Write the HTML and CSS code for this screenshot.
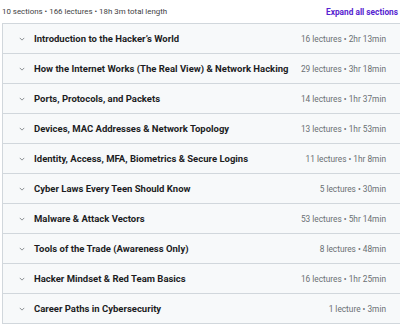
FILE: index.html
```
<!DOCTYPE html>
<html>
<head>
<meta charset="utf-8">
<link rel="stylesheet" href="styles.css">
</head>
<body>
<div class="top">
  <span class="meta">10 sections • 166 lectures • 18h 3m total length</span>
  <span class="expand">Expand all sections</span>
</div>
<div class="list">
  <div class="row"><svg class="chev" viewBox="0 0 8 5"><path d="M1 1l3 3 3-3" fill="none" stroke="#6a6f73" stroke-width="1"/></svg><span class="title">Introduction to the Hacker’s World</span><span class="info">16 lectures • 2hr 13min</span></div>
  <div class="row"><svg class="chev" viewBox="0 0 8 5"><path d="M1 1l3 3 3-3" fill="none" stroke="#6a6f73" stroke-width="1"/></svg><span class="title">How the Internet Works (The Real View) &amp; Network Hacking</span><span class="info">29 lectures • 3hr 18min</span></div>
  <div class="row"><svg class="chev" viewBox="0 0 8 5"><path d="M1 1l3 3 3-3" fill="none" stroke="#6a6f73" stroke-width="1"/></svg><span class="title">Ports, Protocols, and Packets</span><span class="info">14 lectures • 1hr 37min</span></div>
  <div class="row"><svg class="chev" viewBox="0 0 8 5"><path d="M1 1l3 3 3-3" fill="none" stroke="#6a6f73" stroke-width="1"/></svg><span class="title">Devices, MAC Addresses &amp; Network Topology</span><span class="info">13 lectures • 1hr 53min</span></div>
  <div class="row"><svg class="chev" viewBox="0 0 8 5"><path d="M1 1l3 3 3-3" fill="none" stroke="#6a6f73" stroke-width="1"/></svg><span class="title">Identity, Access, MFA, Biometrics &amp; Secure Logins</span><span class="info">11 lectures • 1hr 8min</span></div>
  <div class="row"><svg class="chev" viewBox="0 0 8 5"><path d="M1 1l3 3 3-3" fill="none" stroke="#6a6f73" stroke-width="1"/></svg><span class="title">Cyber Laws Every Teen Should Know</span><span class="info">5 lectures • 30min</span></div>
  <div class="row"><svg class="chev" viewBox="0 0 8 5"><path d="M1 1l3 3 3-3" fill="none" stroke="#6a6f73" stroke-width="1"/></svg><span class="title">Malware &amp; Attack Vectors</span><span class="info">53 lectures • 5hr 14min</span></div>
  <div class="row"><svg class="chev" viewBox="0 0 8 5"><path d="M1 1l3 3 3-3" fill="none" stroke="#6a6f73" stroke-width="1"/></svg><span class="title">Tools of the Trade (Awareness Only)</span><span class="info">8 lectures • 48min</span></div>
  <div class="row"><svg class="chev" viewBox="0 0 8 5"><path d="M1 1l3 3 3-3" fill="none" stroke="#6a6f73" stroke-width="1"/></svg><span class="title">Hacker Mindset &amp; Red Team Basics</span><span class="info">16 lectures • 1hr 25min</span></div>
  <div class="row"><svg class="chev" viewBox="0 0 8 5"><path d="M1 1l3 3 3-3" fill="none" stroke="#6a6f73" stroke-width="1"/></svg><span class="title">Career Paths in Cybersecurity</span><span class="info">1 lecture • 3min</span></div>
</div>
</body>
</html>
```
FILE: styles.css
```
html, body {
  margin: 0;
  padding: 0;
  background: #fff;
  font-family: Roboto, "Noto Sans", sans-serif;
  color: #2d2f31;
  overflow: hidden;
}
.top {
  height: 23px;
  display: flex;
  align-items: center;
  justify-content: space-between;
  padding: 0 2px 0 2px;
  box-sizing: border-box;
}
.meta {
  font-size: 7.9px;
  color: #3e4143;
}
.expand {
  font-size: 8.3px;
  font-weight: 700;
  color: #5624d0;
}
.list {
  margin-left: 2px;
  width: 398px;
  border: 1px solid #d1d7dc;
  border-right: none;
  box-sizing: border-box;
  background: #f7f9fa;
}
.row {
  height: 30px;
  display: flex;
  align-items: center;
  padding: 0 14px 0 16px;
  box-sizing: border-box;
  border-top: 1px solid #d1d7dc;
}
.row:first-child {
  border-top: none;
  height: 29px;
}
.chev {
  width: 6px;
  height: 4px;
  margin-right: 9px;
  flex: none;
}
.title {
  font-size: 9.5px;
  font-weight: 700;
  color: #1c1d1f;
  flex: 1;
  white-space: nowrap;
}
.info {
  font-size: 8.3px;
  color: #6a6f73;
  white-space: nowrap;
  margin-left: 10px;
}
```
